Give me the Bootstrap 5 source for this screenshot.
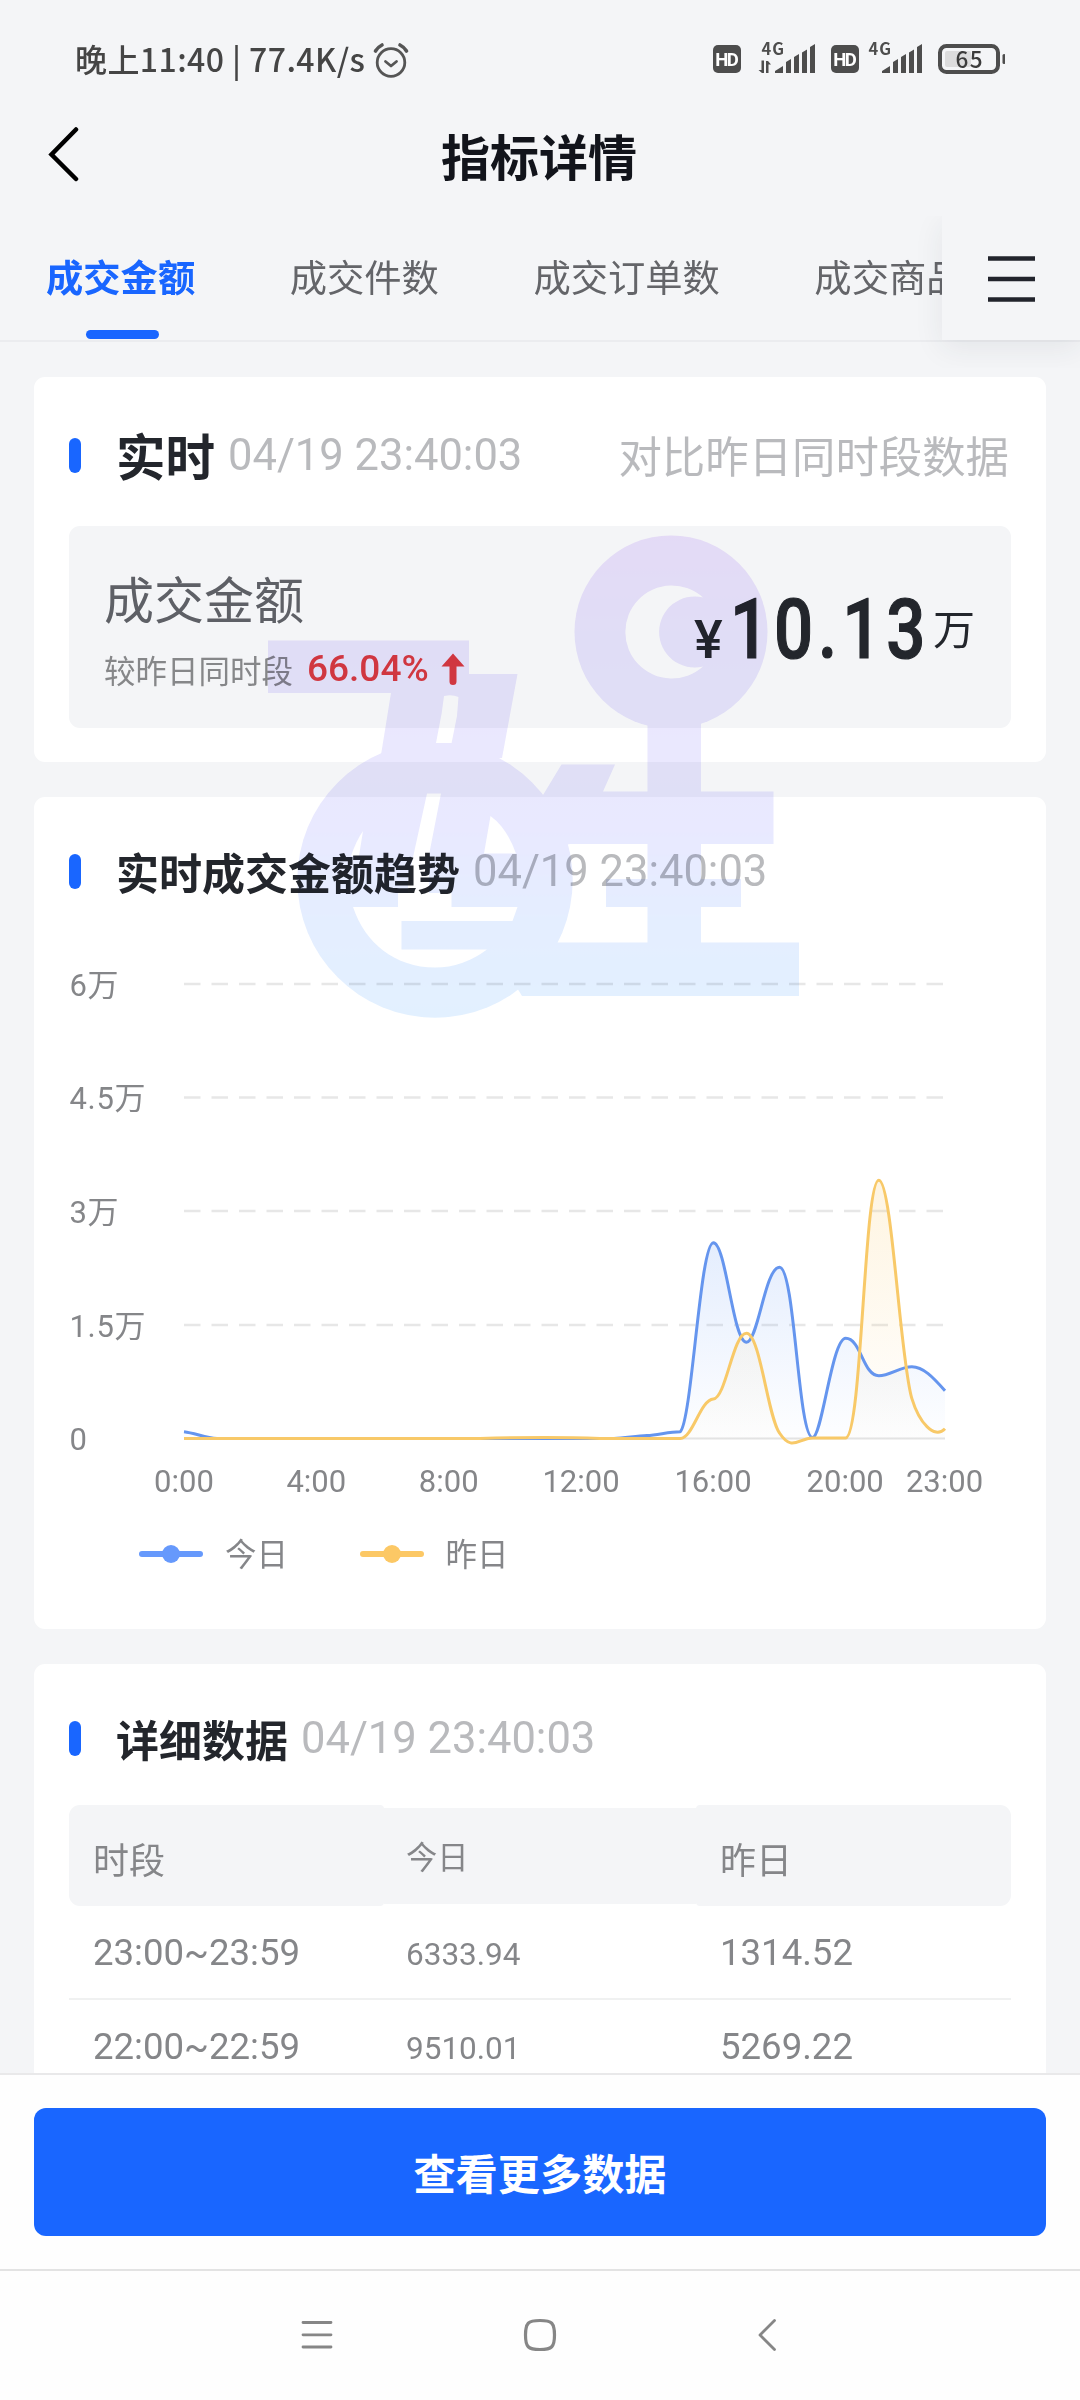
<!DOCTYPE html>
<html lang="zh-CN">
<head>
<meta charset="utf-8">
<meta name="viewport" content="width=device-width, initial-scale=1">
<title>指标详情</title>
<link href="https://cdn.jsdelivr.net/npm/bootstrap@5.3.0/dist/css/bootstrap.min.css" rel="stylesheet">
<style>
  :root { --blue: #1966ff; --bg: #f4f5f7; }
  body { background: var(--bg); font-family: "Noto Sans CJK SC", sans-serif; color: #23262c; line-height: 1; }
  .screen { width: 1080px; height: 2400px; background: var(--bg); }
  .rb { font-family: Roboto, "Noto Sans CJK SC", sans-serif; }

  .status-bar { height: 120px; padding: 0 75px 0 75px; color: #454545; }
  .clock { font-size: 32px; font-weight: 500; line-height: 46px; padding-bottom: 5px; white-space: pre; letter-spacing: .42px; }
  .title-bar { height: 96px; padding: 0 50px 26px 48px; }
  .title-bar h1 { font-size: 49px; font-weight: 700; color: #12141b; line-height: 70px; }
  .title-side { width: 40px; }

  .tab-strip { height: 126px; border-bottom: 2px solid #ebecef; }
  .tabs { gap: 94.5px; padding: 0 0 0 46px; }
  .tab-item { font-size: 37.3px; line-height: 50px; color: #646569; white-space: nowrap; padding-top: 35px; height: 124px; }
  .tab-item.active { color: var(--blue); font-weight: 700; }
  .tab-item.active::after { content: ""; display: block; width: 73px; height: 9px; border-radius: 5px; background: var(--blue); margin: 29px 0 0 40px; }
  .tab-menu { width: 138px; background: var(--bg); box-shadow: 0 8px 28px rgba(40,50,70,.08); clip-path: inset(0 0 -28px -30px); }

  .cards { padding: 35px 34px 0; gap: 35px; }
  .panel { background: #fff; border-radius: 11px; padding: 0 35px; flex: none; }
  .panel-head { height: 149px; }
  .panel-head .pill { width: 12px; height: 35px; border-radius: 6px; background: var(--blue); margin-right: 35px; }
  .panel-head h2 { font-size: 43px; font-weight: 700; line-height: 60px; margin: 0; color: #23262c; padding-bottom: 2px; }
  .stamp { font-size: 43.5px; line-height: 60px; color: #b9babd; margin-left: 13px; white-space: nowrap; }
  .compare { font-size: 43.4px; line-height: 60px; color: #b9babd; padding: 0 2px 3px 0; }

  .metric { height: 202px; border-radius: 11px; background: var(--bg); padding: 0 36px 0 35px; }
  .metric-name { font-size: 50px; line-height: 66px; color: #5e6066; margin-bottom: 17px; }
  .metric-sub { font-size: 31.5px; line-height: 44px; color: #868789; }
  .metric-rate { font-size: 37px; font-weight: 500; color: #e23c40; line-height: 44px; margin: 0 12px 0 14px; }
  .amount { color: #23262c; padding-top: 6px; }
  .amount .yen { font-size: 54px; font-weight: 500; }
  .amount .num { font-size: 84px; font-weight: 500; letter-spacing: 6px; display: inline-block; transform: scaleX(.82); transform-origin: 100% 50%; margin: 0 3px 0 -37px; -webkit-text-stroke: 1.2px #23262c; }
  .amount .unit { font-size: 42px; align-self: flex-start; padding-top: 18px; }

  .chart-text { font-family: Roboto, "Noto Sans CJK SC", sans-serif; font-size: 31px; fill: #858689; }
  .y-labels { letter-spacing: .7px; }
  .legend-row { height: 88px; padding-left: 70px; }
  .legend-row span { font-size: 31.5px; line-height: 44px; color: #858689; margin: 0 71.5px 4px 22px; }

  .data-grid { display: grid; grid-template-columns: 315px 312px 315px; color: #858689; }
  .cell-text { padding-left: 24px; font-size: 36.6px; height: 94px; line-height: 93px; }
  .cell-mid { padding-left: 22px; font-size: 31.5px; line-height: 97px; }
  .cell-head { background: var(--bg); border-radius: 11px 4px 4px 11px; height: 101px; line-height: 106px; font-size: 36px; font-family: "Noto Sans CJK SC", sans-serif; }
  .cell-head.cell-last { border-radius: 4px 11px 11px 4px; }
  .cell-head.cell-mid { border-radius: 0; height: 96px; align-self: center; line-height: 96px; font-size: 31.3px; }
  .ruled { border-bottom: 2px solid #f0f1f1; }

  .dock { background: #fefefe; border-top: 2px solid #e9e9ea; height: 196px; padding: 33px 34px 0; z-index: 3; position: relative; }
  .btn-more { background: var(--blue); color: #fff; border: 0; border-radius: 12px; height: 128px; font-size: 42.2px; font-weight: 700; line-height: 1; padding: 0; }
  .nav-keys { background: #fefefe; border-top: 2px solid #e3e3e3; height: 131px; z-index: 3; position: relative; }
  .watermark { position: absolute; left: 0; top: 0; pointer-events: none; z-index: 2; mix-blend-mode: multiply; }
</style>
<script src="https://cdn.jsdelivr.net/npm/bootstrap@5.3.0/dist/js/bootstrap.bundle.min.js"></script>
</head>
<body>
<div class="screen d-flex flex-column position-relative overflow-hidden">

  <div class="status-bar d-flex align-items-center justify-content-between flex-shrink-0">
    <div class="d-flex align-items-center">
      <span class="clock">晚上11:40 | 77.4K/s</span>
      <svg class="ms-2" width="36" height="38" viewBox="0 0 36 38" fill="none" stroke="#555" stroke-width="2.8" stroke-linecap="round" stroke-linejoin="round">
        <circle cx="18" cy="21.500" r="13.800"/><path d="M12.500 20.500l5.500 4.500 5.500-4.500"/><path d="M2.500 10Q5 6 9 4M33.500 10Q31 6 27 4" stroke-width="3.600"/>
      </svg>
    </div>
    <svg width="293" height="60" viewBox="712 30 293 60" fill="#4d4d4d" font-family="Noto Sans CJK SC, sans-serif">
      <g>
        <rect x="713" y="45" width="28" height="28" rx="5"/>
        <text x="727" y="66" text-anchor="middle" font-size="18.500" font-weight="700" fill="#fff" font-family="Roboto, sans-serif" textLength="23.500">HD</text>
        <path d="M775 73v-2l8-5v7zM786 73V62l5-3v14zM794 73V57l5-3v19zM802 73V52.500l5-3V73zM810 73V47l5-3v29z"/>
      </g>
      <text x="761.500" y="54.500" font-size="16.500" font-weight="700" textLength="22.500">4G</text>
      <path d="M761.500 60.500h2.500v12.500h-2l-3.500-3h3zM766 73V61h2l3 3.500h-2.500V73z"/>
      <g>
        <rect x="831" y="45" width="28" height="28" rx="5"/>
        <text x="845" y="66" text-anchor="middle" font-size="18.500" font-weight="700" fill="#fff" font-family="Roboto, sans-serif" textLength="23.500">HD</text>
        <path d="M882 73v-2l8-5v7zM893 73V62l5-3v14zM901 73V57l5-3v19zM909 73V52.500l5-3V73zM917 73V47l5-3v29z"/>
      </g>
      <text x="868.500" y="54.500" font-size="16.500" font-weight="700" textLength="22.500">4G</text>
      <rect x="940" y="46" width="58" height="26" rx="6.500" fill="none" stroke="#4d4d4d" stroke-width="4"/>
      <rect x="945" y="51" width="26" height="16" rx="2" fill="#dcdcdd"/>
      <text x="969" y="67.500" text-anchor="middle" font-size="22.500" font-weight="500" fill="#3c3c3c" textLength="27">65</text>
      <rect x="1002.500" y="54" width="3" height="10" rx="1.500"/>
    </svg>
  </div>

  <div class="title-bar d-flex align-items-center justify-content-between flex-shrink-0">
    <div class="title-side">
      <svg class="d-block" width="32" height="56" viewBox="49 127 32 56" fill="none" stroke="#000" stroke-width="4.500" stroke-linecap="round"><path d="M77 129.500L52.500 154.500 77 179"/></svg>
    </div>
    <h1 class="m-0">指标详情</h1>
    <div class="title-side"></div>
  </div>

  <div class="tab-strip d-flex flex-shrink-0">
    <div class="tabs d-flex flex-grow-1 overflow-hidden" style="width:0">
      <div class="tab-item active">成交金额</div>
      <div class="tab-item">成交件数</div>
      <div class="tab-item">成交订单数</div>
      <div class="tab-item">成交商品数</div>
    </div>
    <div class="tab-menu d-flex align-items-center flex-shrink-0">
      <svg style="margin-left:46px" width="48" height="48" viewBox="0 0 48 48" stroke="#22242c" stroke-width="4.500"><path d="M0 4.500h47M0 25h47M0 45.500h47"/></svg>
    </div>
  </div>

  <div class="cards d-flex flex-column flex-grow-1 overflow-hidden" style="min-height:0">
    <section class="panel" style="height:385px">
      <div class="panel-head d-flex align-items-center pt-2">
        <span class="pill"></span>
        <h2 style="font-size:49.5px">实时</h2>
        <span class="stamp rb">04/19 23:40:03</span>
        <span class="compare ms-auto">对比昨日同时段数据</span>
      </div>
      <div class="metric d-flex align-items-center justify-content-between">
        <div>
          <div class="metric-name">成交金额</div>
          <div class="d-flex align-items-center">
            <span class="metric-sub">较昨日同时段</span>
            <span class="metric-rate rb">66.04%</span>
            <svg width="24" height="34" viewBox="0 0 24 34" fill="#e23c40"><path d="M12 1.500L23.500 14.500H15.500V29.500a3.500 3.500 0 0 1-7 0V14.500H.5z"/></svg>
          </div>
        </div>
        <div class="amount d-flex align-items-baseline">
          <span class="yen rb">¥</span><span class="num rb">10.13</span><span class="unit">万</span>
        </div>
      </div>
    </section>

    <section class="panel" style="height:832px">
      <div class="panel-head d-flex align-items-center">
        <span class="pill"></span>
        <h2>实时成交金额趋势</h2>
        <span class="stamp rb">04/19 23:40:03</span>
      </div>
      <svg class="d-block" width="942" height="564" viewBox="69 946 942 564">
        <defs>
          <linearGradient id="todayFill" x1="0" y1="1242" x2="0" y2="1439" gradientUnits="userSpaceOnUse"><stop offset="0" stop-color="#6096f6" stop-opacity=".17"/><stop offset="1" stop-color="#6096f6" stop-opacity=".01"/></linearGradient>
          <linearGradient id="prevFill" x1="0" y1="1180" x2="0" y2="1439" gradientUnits="userSpaceOnUse"><stop offset="0" stop-color="#fac864" stop-opacity=".19"/><stop offset="1" stop-color="#fac864" stop-opacity=".01"/></linearGradient>
        </defs>
        <g stroke="#e7e7e7" stroke-width="2.400" stroke-dasharray="16.500 11">
          <path d="M184 984H945"/><path d="M184 1097.500H945"/><path d="M184 1211H945"/><path d="M184 1325H945"/>
        </g>
        <path d="M184 1438.500H945" stroke="#e4e4e4" stroke-width="2"/>
        <path fill="url(#todayFill)" d="M184 1431.700C195 1433 206 1438 217 1438.500L614 1438.500C625 1438 636 1436 647 1435.500C658 1435 669 1431.700 680.300 1431.700C692 1420 700 1243 713.400 1242.700C726 1243 733 1342.300 746.500 1342.300C758 1342.300 765 1267.300 779.500 1267.300C795 1267.300 798 1437.500 812.600 1437.500C822 1437.500 832 1338.300 845.700 1338.300C861 1338.300 863 1375.700 878.800 1375.700C890 1375.700 900 1366.700 911.900 1366.700C923 1366.700 933 1377 945 1390.700V1438.500H184z"/>
        <path fill="url(#prevFill)" d="M680.300 1438.500C693 1438 700 1400 713.400 1399C726 1398 733 1333.300 746.500 1333.300C760 1333.300 768 1418 779.500 1433C792 1452 798 1438.500 812.600 1438L845.700 1438C862 1436 864 1180.300 878.800 1180.300C892 1180.300 900 1360 911.900 1398.600C919 1422 934 1440 945 1428.700V1438.500z"/>
        <g fill="none" stroke-width="3" stroke-linejoin="round">
          <path stroke="#6595ee" d="M184 1431.700C195 1433 206 1438 217 1438.500L614 1438.500C625 1438 636 1436 647 1435.500C658 1435 669 1431.700 680.300 1431.700C692 1420 700 1243 713.400 1242.700C726 1243 733 1342.300 746.500 1342.300C758 1342.300 765 1267.300 779.500 1267.300C795 1267.300 798 1437.500 812.600 1437.500C822 1437.500 832 1338.300 845.700 1338.300C861 1338.300 863 1375.700 878.800 1375.700C890 1375.700 900 1366.700 911.900 1366.700C923 1366.700 933 1377 945 1390.700"/>
          <path stroke="#f8c968" d="M184 1438.500L480 1438.500Q550 1436.500 600 1438.500L680.300 1438.500C693 1438 700 1400 713.400 1399C726 1398 733 1333.300 746.500 1333.300C760 1333.300 768 1418 779.500 1433C792 1452 798 1438.500 812.600 1438L845.700 1438C862 1436 864 1180.300 878.800 1180.300C892 1180.300 900 1360 911.900 1398.600C919 1422 934 1440 945 1428.700"/>
        </g>
        <g class="chart-text">
          <g class="y-labels">
            <text x="69.500" y="995.500">6万</text><text x="69.500" y="1109">4.5万</text><text x="69.500" y="1223">3万</text><text x="69.500" y="1336.500">1.5万</text><text x="69.500" y="1450">0</text>
          </g>
          <g text-anchor="middle">
            <text x="184" y="1492">0:00</text><text x="316.300" y="1492">4:00</text><text x="448.700" y="1492">8:00</text><text x="581" y="1492">12:00</text><text x="713" y="1492">16:00</text><text x="845.200" y="1492">20:00</text><text x="944.500" y="1492">23:00</text>
          </g>
        </g>
      </svg>
      <div class="legend-row d-flex align-items-center">
        <svg width="64" height="20" viewBox="0 0 64 20" fill="#6699fc"><rect y="7" width="64" height="6" rx="3"/><circle cx="32" cy="10" r="9"/></svg>
        <span>今日</span>
        <svg width="64" height="20" viewBox="0 0 64 20" fill="#fcc865"><rect y="7" width="64" height="6" rx="3"/><circle cx="32" cy="10" r="9"/></svg>
        <span>昨日</span>
      </div>
    </section>

    <section class="panel" style="height:600px">
      <div class="panel-head d-flex align-items-center" style="height:141px;padding-top:8px">
        <span class="pill"></span>
        <h2>详细数据</h2>
        <span class="stamp rb">04/19 23:40:03</span>
      </div>
      <div class="data-grid rb">
        <div class="cell-text cell-head">时段</div><div class="cell-text cell-mid cell-head">今日</div><div class="cell-text cell-head cell-last">昨日</div>
        <div class="cell-text ruled">23:00~23:59</div><div class="cell-text cell-mid ruled">6333.94</div><div class="cell-text ruled">1314.52</div>
        <div class="cell-text">22:00~22:59</div><div class="cell-text cell-mid">9510.01</div><div class="cell-text">5269.22</div>
      </div>
    </section>
  </div>

  <div class="dock flex-shrink-0">
    <button class="btn btn-more w-100" type="button">查看更多数据</button>
  </div>
  <div class="nav-keys flex-shrink-0">
    <svg class="d-block" width="1080" height="129" viewBox="0 2271 1080 129" fill="none" stroke="#868686" stroke-width="2.800" stroke-linecap="round" stroke-linejoin="round">
      <path d="M303 2322.500h28M303 2334.800h28M303 2347h28"/>
      <path d="M540 2320.500C552 2320.500 554.500 2323 554.500 2335S552 2349.500 540 2349.500 525.500 2347 525.500 2335 528 2320.500 540 2320.500z" stroke-width="3.200"/>
      <path d="M774.500 2320.500L760 2335l14.500 14.500"/>
    </svg>
  </div>

  <svg class="watermark" width="1080" height="1100" viewBox="0 0 1080 1100">
    <defs>
      <linearGradient id="wm" x1="0" y1="536" x2="0" y2="1018" gradientUnits="userSpaceOnUse">
        <stop offset="0" stop-color="#9148f4"/><stop offset=".2" stop-color="#7c58f4"/><stop offset=".6" stop-color="#6c6cfa"/><stop offset=".8" stop-color="#4d8cfa"/><stop offset="1" stop-color="#409cff"/>
      </linearGradient>
      <mask id="cut" maskUnits="userSpaceOnUse" x="250" y="500" width="600" height="560">
        <g fill="#fff">
          <path d="M268 640.500H469V674H517.500L502 758 380.500 758 391 693H268z"/>
          <circle cx="435" cy="880" r="137.700"/>
          <circle cx="671" cy="632" r="96.500"/>
          <path d="M647.500 700H701V960H647.500z"/>
          <path d="M561.500 764.500H615L603 791.500H773.500V844H570L540 850V800z"/>
          <path d="M606 879H741V907H606z"/>
          <path d="M540 942.500H799V996H522L500 960z"/>
        </g>
        <g fill="#000">
          <path d="M444 696Q452 694 458.500 697L457 716 451.600 743H436L441.700 713z"/>
          <path d="M427 793.500H441L429 855V893H451.500V907H517.500L512.500 921H401.500V949.500H487Q463 967.500 435 967.500C395 967.500 365 943 353 907H398V893H408V880z"/>
          <path d="M363 831L359 856H351Q356 841 363 831z"/>
          <path d="M490.500 816Q507 828 516 853.500H484z"/>
          <path d="M703 597.500A46.500 46.500 0 1 0 703 666.500A35.500 35.500 0 1 1 703 597.500z"/>
        </g>
      </mask>
    </defs>
    <rect x="250" y="500" width="600" height="560" fill="url(#wm)" opacity=".15" mask="url(#cut)"/>
  </svg>
</div>
</body>
</html>
